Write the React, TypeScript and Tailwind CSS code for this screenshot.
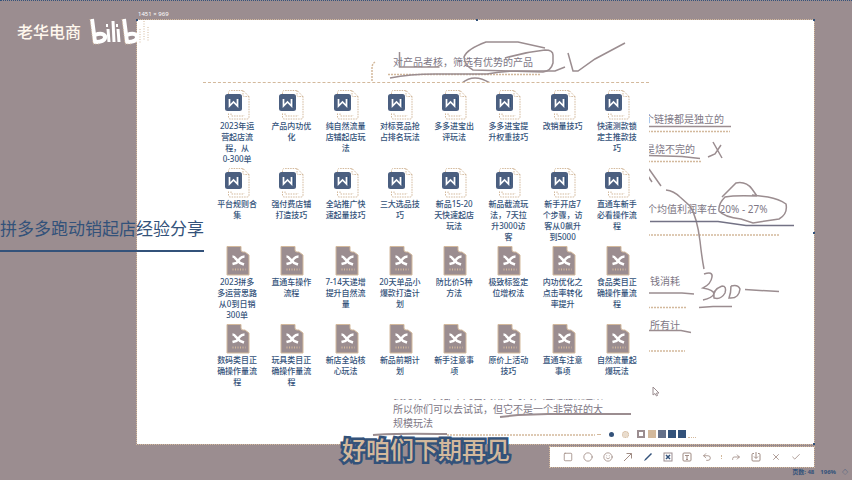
import React from "react";
import { ArrowUpRight, Check, Circle, Forward, Pencil, Save, Square, Smile, SquareX, Type, Undo2, X } from "lucide-react";

const wordFiles = [
  "2023年运营起店流程，从0\u2060-\u2060300单", "产品内功优化", "纯自然流量店铺起店玩法", "对标竞品抢占排名玩法",
  "多多进宝出评玩法", "多多进宝提升权重技巧", "改销量技巧", "快速测款锁定主推款技巧",
  "平台规则合集", "强付费店铺打造技巧", "全站推广快速起量技巧", "三大选品技巧",
  "新品15-20天快速起店玩法", "新品截流玩法，7天拉升3000访客", "新手开店7个步骤，访客从0飙升到5000", "直通车新手必看操作流程",
];

const mapFiles = [
  "2023拼多多运营思路从0到日销300单", "直通车操作流程", "7-14天递增提升自然流量", "20天单品小爆款打造计划",
  "防比价5种方法", "极致标签定位增权法", "内功优化之点击率转化率提升", "食品类目正确操作量流程",
  "数码类目正确操作量流程", "玩具类目正确操作量流程", "新店全站核心玩法", "新品前期计划",
  "新手注意事项", "原价上活动技巧", "直通车注意事项", "自然流量起爆玩法",
];

function WordIcon() {
  return (
    <svg viewBox="0 0 26 30" className="h-[30px] w-[26px] shrink-0" aria-hidden="true">
      <path d="M4.500 4V2.500q0-2 2-2H19l6 6V27q0 2-2 2H6.500q-2 0-2-2v-4M19 .5V5q0 1.500 1.500 1.500H25M7 23.500V25q0 1 1 1h11q1 0 1-1" fill="none" stroke="#d3b99c" strokeDasharray="1.500 1" />
      <rect x="1" y="4" width="17" height="17" rx="2.500" fill="#4b5f80" />
      <path d="M5.500 9v7l4-4 4 4V9" fill="none" stroke="#fff" strokeWidth="1.700" />
      <path d="M15.500 8v9" stroke="#33527a" />
    </svg>
  );
}

function MapIcon() {
  return (
    <svg viewBox="0 0 26 30" className="h-[30px] w-[26px] shrink-0" aria-hidden="true">
      <path d="M3 .5H17V4q0 2 2 2h2l4 3V29H3z" fill="#9b8d90" stroke="#d3b99c" />
      <path d="M8.500 10.500q2 0 3 2l4.500 4.500 4 1.500M20.500 10.500q-3 0-4.500 2l-3.500 4.500-4 1" fill="none" stroke="#fff" strokeWidth="2.500" />
      <path d="M8.500 23.500h13" stroke="#d3b99c" strokeWidth="2" strokeDasharray="1 1.500" />
    </svg>
  );
}

function FileItem({ name, icon }: { name: string; icon: React.ReactNode }) {
  return (
    <li className="flex h-[78px] flex-col items-center">
      {icon}
      <span className="w-[42px] text-center text-[8px] leading-[11px] font-medium text-[#33527a]">{name}</span>
    </li>
  );
}

function FilePanel() {
  return (
    <ul className="grid grid-cols-8 border-t border-dashed border-[#d3b99c] pt-[7px] pr-[5px] pl-[7px]">
      {wordFiles.map((name) => <FileItem key={name} name={name} icon={<WordIcon />} />)}
      {mapFiles.map((name) => <FileItem key={name} name={name} icon={<MapIcon />} />)}
    </ul>
  );
}

function Palette() {
  return (
    <div className="mr-[118px] flex h-2 items-center justify-end gap-[2px]">
      <button aria-label="最细" className="mr-[6px] h-px w-1 bg-[#d3b99c]" />
      <button aria-label="中等" className="mr-[6px] size-[5px] rounded-full bg-[#33527a]" />
      <button aria-label="较粗" className="mr-[6px] size-[7px] rounded-full border border-dotted border-[#d3b99c] bg-[#d3b99c]/50" />
      <button aria-label="白色" className="size-2 border-2 border-[#9b8d90] bg-white" />
      <button aria-label="浅棕" className="ml-px size-2 bg-[#d3b99c]" />
      <button aria-label="灰蓝" className="size-2 bg-[#647089]" />
      <button aria-label="蓝色" className="size-2 bg-[#33527a]" />
      <button aria-label="深蓝" className="size-2 bg-[#33527a]" />
      <span className="h-2 w-2 border-b border-dotted border-[#d3b99c]" />
    </div>
  );
}

const tools = [
  { label: "矩形", Icon: Square }, { label: "椭圆", Icon: Circle }, { label: "表情", Icon: Smile },
  { label: "箭头", Icon: ArrowUpRight }, { label: "画笔", Icon: Pencil }, { label: "马赛克", Icon: SquareX },
  { label: "文字", Icon: Type }, { label: "撤销", Icon: Undo2 }, { label: "分享", Icon: Forward },
  { label: "保存", Icon: Save }, { label: "取消", Icon: X }, { label: "完成", Icon: Check },
];

function ToolGlyph({ label, Icon }: (typeof tools)[number]) {
  if (label === "箭头") {
    return <svg viewBox="0 0 10 10" className="size-[10px]" fill="none" stroke="currentColor"><path d="M1 9l7.500-7.500M3.500 1.500h5v5" /></svg>;
  }
  if (label === "画笔") {
    return <svg viewBox="0 0 10 10" className="size-[10px]"><path d="M1 9l1-2 6-6 1 1-6 6z" fill="#33527a" /></svg>;
  }
  if (label === "马赛克") {
    return <svg viewBox="0 0 10 10" className="size-[10px]" fill="none"><rect x="1" y="1" width="8" height="8" stroke="#9b8d90" /><path d="M3 3l4 4M7 3l-4 4" stroke="#33527a" strokeWidth="1.500" /></svg>;
  }
  if (label === "文字") {
    return <svg viewBox="0 0 10 10" className="size-[10px]" fill="none" stroke="currentColor"><rect x="1" y="1" width="8" height="8" rx="1" /><path d="M3 3.500h4M5 3.500v4M4 7.500h2" /></svg>;
  }
  if (label === "保存") {
    return <svg viewBox="0 0 10 10" className="size-[10px]" fill="none" stroke="currentColor"><path d="M3 1.500H2q-1 0-1 1v5.500q0 1 1 1h6q1 0 1-1v-5.500q0-1-1-1H7M5 0v6M3 4.500l2 2 2-2" /></svg>;
  }
  return <Icon size={10} strokeWidth={2} />;
}

function Toolbar() {
  return (
    <div role="toolbar" className="flex h-5 w-[264px] items-center justify-between bg-white px-3 text-[#a08c84] outline outline-dotted outline-[#d3b99c]">
      {tools.map((tool) => (
        <React.Fragment key={tool.label}>
          {tool.label === "分享" && <span className="h-1 border-l border-dotted border-[#d3b99c]" />}
          <button aria-label={tool.label} className="flex size-3 items-center justify-center"><ToolGlyph {...tool} /></button>
        </React.Fragment>
      ))}
    </div>
  );
}

function Ink() {
  return (
    <svg viewBox="0 0 852 480" className="pointer-events-none absolute top-0 left-0 h-[480px] w-[852px]" fill="none" aria-hidden="true">
      <g stroke="#d3b99c" strokeWidth="1.500">
        <path d="M388 73.500h153M648 130.500h82M648 160.500h53M648 234h131M648 306.500h38M648 350h37M447 434h148" strokeDasharray="2 1" />
        <path d="M375 61q-3 2-3 6v14" strokeDasharray="2 1" />
      </g>
      <g stroke="#9b8d90" strokeWidth="1.500">
        <path d="M399.500 51v15h40M390 77q20-4 45-4h52q15-3 30-3h38l10-4" />
        <path d="M505 57q20-6 40-8 8 0 8 5v8q-2 8-10 9l-70-2q-8-4-9-13 3-8 22-15h32l27 6M462 82q12-10 28 0" />
        <path d="M568 52l5 18h5l17-12 30-16" />
        <path d="M648 125.500h83M648 154.500l34 1 18 2M713 141l9 16M721 144l-6 9-7 3M649 168l12 17M648 175l4 6" />
        <path d="M666 189q8 1 14 7l10 9q7 11 10 35 2 18 4 28" />
        <path d="M722 196l14-14q10-2 16 6l5 7M757 195q-22-1-32 1-7 7-6 14 5 6 22 8l12 4 26-4q9-5 7-15-7-5-18-7l-16-2" />
        <path d="M650 220.500h68l28 4h48" stroke="#737285" />
        <path d="M648 292h34l12 1M745 288.500l15 1 19 1M699 306.500l14-1h19M648 329.500h33l10 2" />
        <path d="M704 273q9-3 8 3-1 7-9 11 11 2 11 6-2 4-11 6M722 285q-10 4-8 12 7 2 11-5 2-7-3-7M731 285q0 7-2 12 10 1 11-9-2-5-9-3" />
        <path d="M500 416l18-2 30-1h83M373 434q20-2 74-1" strokeWidth="2" />
      </g>
    </svg>
  );
}

function BiliLogo() {
  return (
    <svg viewBox="0 0 62 30" className="h-[30px] w-[62px]" fill="none" strokeLinejoin="round" aria-label="bilibili">
      <g stroke="#fff" strokeWidth="4">
        <path d="M3 2l3 23q11 0 10-6-3-4-10-1" />
        <path d="M35 2l3 23q11 0 10-6-3-4-10-1" />
      </g>
      <path d="M19 12l1 13M24 4l1 21M29 12l1 13" stroke="#fff" strokeWidth="3" />
      <path d="M18 7v3M28 7v3" stroke="#fff" strokeWidth="2" />
      <path d="M1 2l3 25h7M33 2l3 25h7M51 12v14M55 4v20M59 10v15" stroke="#d3b99c" strokeDasharray="1 1.500" />
    </svg>
  );
}

const handle = "absolute size-[2px] bg-[#33527a]";

export default function App() {
  return (
    <main className="relative flex min-h-screen flex-col overflow-hidden border-t border-dotted border-[#33527a] bg-[#9b8d90] pt-[19px] font-['Noto_Sans','Noto_Sans_CJK_SC',sans-serif] text-[#7e7785]">
      <article className="relative mr-[38px] ml-[137px] flex flex-col bg-white pt-[35px] pb-[6px] text-[10px] leading-[14px] outline outline-dotted outline-[#d3b99c]">
        <p className="mb-[43px] pl-64">对产品考核，筛选有优势的产品</p>
        <p className="mb-4 pl-[507px]">个链接都是独立的</p>
        <p className="mb-[46px] pl-[508px]">是烧不完的</p>
        <p className="mb-[58px] pl-[510px]">个均值利润率在 20% - 27%</p>
        <p className="mb-[30px] pl-[513px]">钱消耗</p>
        <p className="mb-14 pl-[513px]">所有计</p>
        <p className="pl-64">我见得一天都不凡自大概的时间，还是能做起来</p>
        <p className="pl-64">所以你们可以去试试，但它不是一个非常好的大</p>
        <p className="pl-64">规模玩法</p>
        <Palette />
        <i className={`${handle} -top-px -left-px`} />
        <i className={`${handle} -top-px left-1/2`} />
        <i className={`${handle} -top-px -right-px`} />
        <i className={`${handle} top-1/2 -right-px`} />
        <i className={`${handle} -right-px -bottom-px`} />
      </article>
      <div className="mt-[3px] mr-[38px] flex justify-end"><Toolbar /></div>
      <footer className="flex justify-end gap-[6px] pr-1 text-[6px] leading-[10px] font-bold text-[#33527a]">
        <span>页数: 48</span><span>196%</span><span>◇</span>
      </footer>

      <Ink />
      <section aria-label="文件" className="absolute top-[81px] left-[203px] h-[317px] w-[446px] bg-white"><FilePanel /></section>
      <svg viewBox="0 0 8 12" className="absolute top-[385px] left-[652px] h-3 w-2" aria-hidden="true"><path d="M1 1v8l2-1.500L4.500 10l1-.5-1-2.500H7z" fill="#fff" stroke="#9b8d90" /></svg>
      <h1 className="absolute top-[215px] left-0 w-[204px] border-b-2 border-[#33527a] pb-2 text-[17px] leading-[26px] whitespace-nowrap text-[#33527a]">
        拼多多跑动销起店经验分享
      </h1>
      <div className="absolute top-[16px] left-[17px] flex items-center gap-2 text-[16px] leading-[30px] font-medium text-[#fff8ee]">
        <span>老华电商</span><BiliLogo />
      </div>
      <span className="absolute top-[8px] left-[138px] text-[6px] leading-[10px] text-white">1451 × 969</span>
      <p className="absolute inset-x-0 top-[432px] text-center text-[24px] leading-[34px] font-medium text-[#d3b99c] [-webkit-text-stroke:5px_#33527a] [paint-order:stroke_fill]">好咱们下期再见</p>
    </main>
  );
}
